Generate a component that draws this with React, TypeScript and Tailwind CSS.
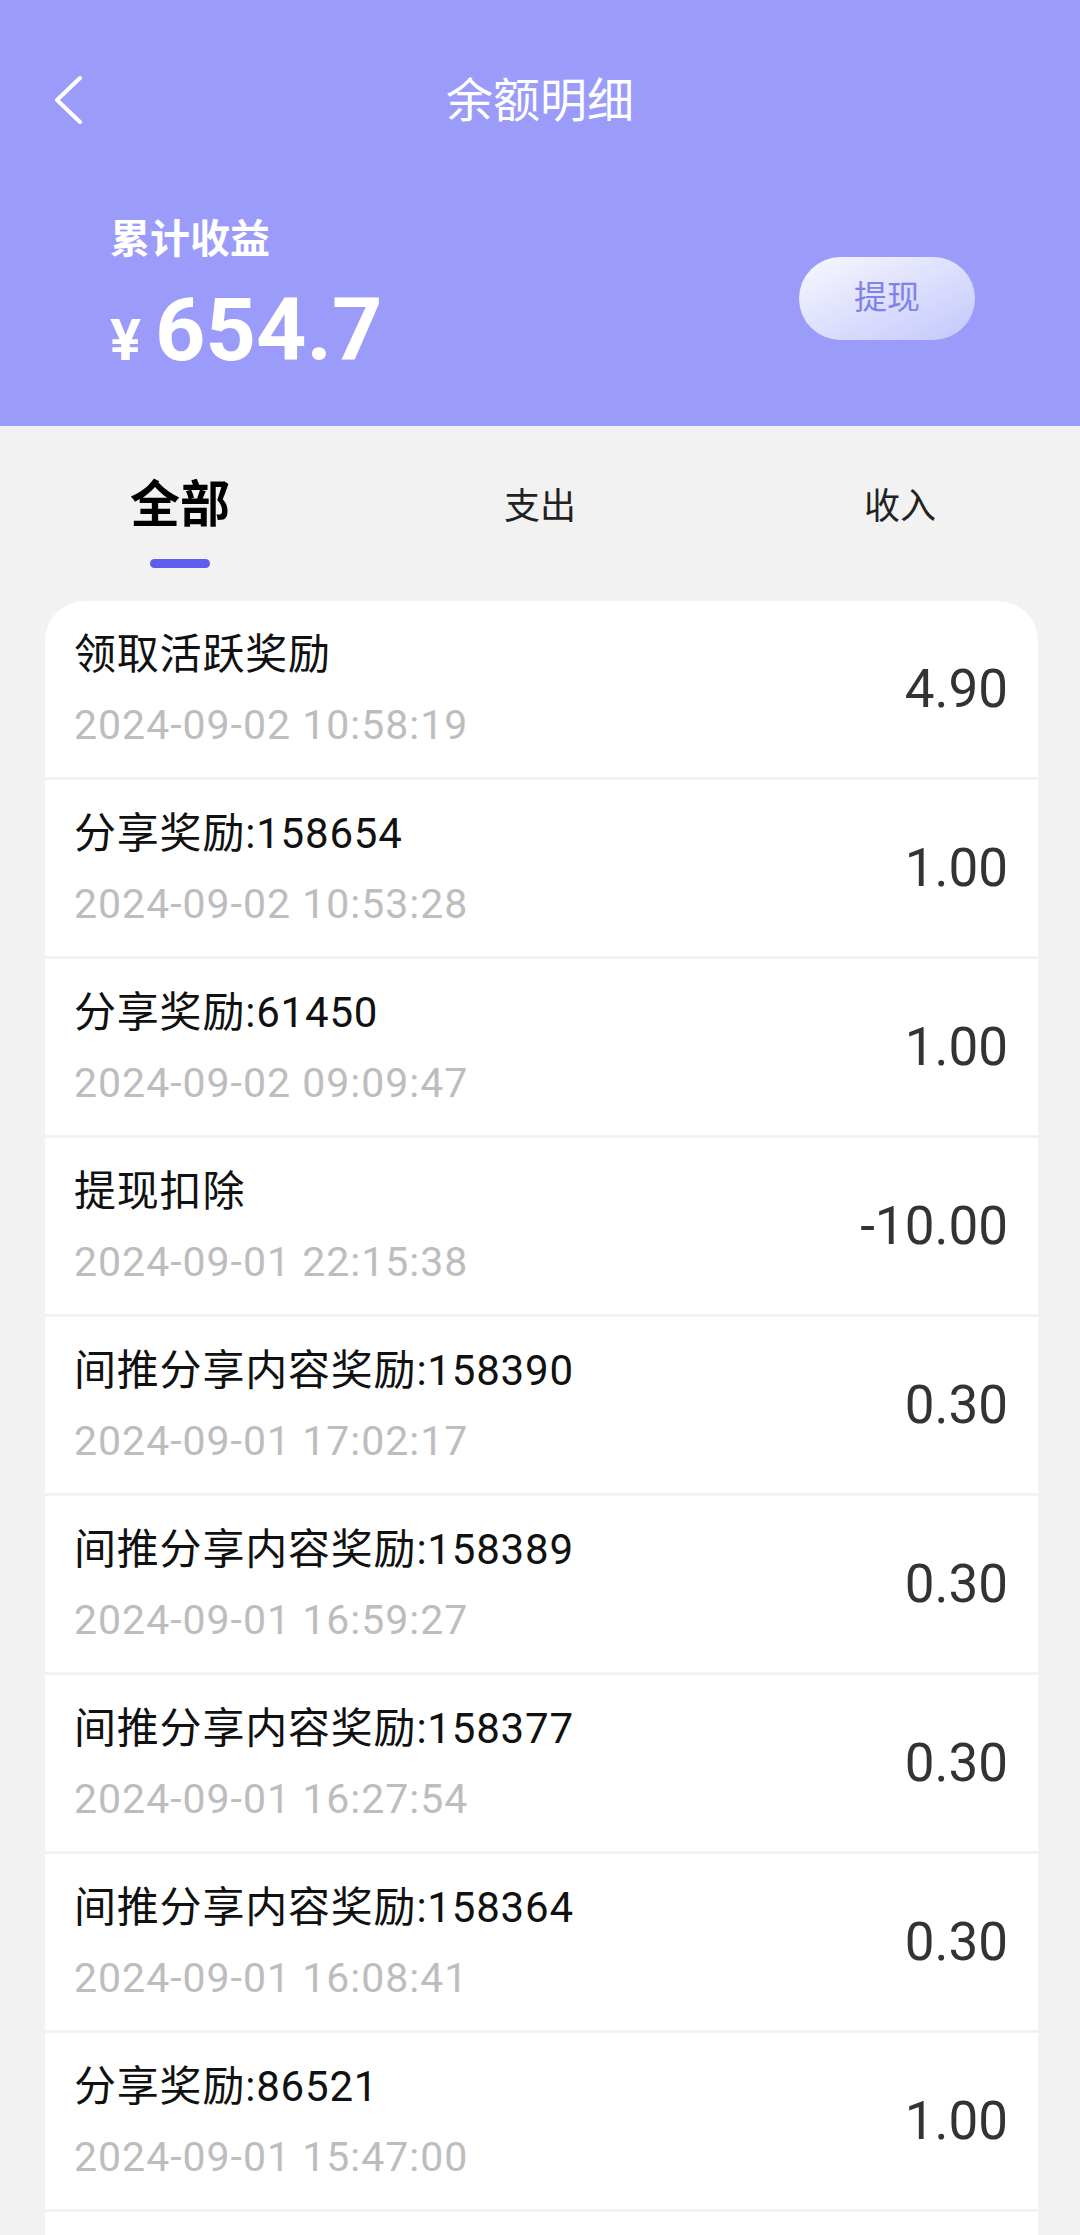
const records = [
  { title: "领取活跃奖励", time: "2024-09-02 10:58:19", amount: "4.90" },
  { title: "分享奖励:158654", time: "2024-09-02 10:53:28", amount: "1.00" },
  { title: "分享奖励:61450", time: "2024-09-02 09:09:47", amount: "1.00" },
  { title: "提现扣除", time: "2024-09-01 22:15:38", amount: "-10.00" },
  { title: "间推分享内容奖励:158390", time: "2024-09-01 17:02:17", amount: "0.30" },
  { title: "间推分享内容奖励:158389", time: "2024-09-01 16:59:27", amount: "0.30" },
  { title: "间推分享内容奖励:158377", time: "2024-09-01 16:27:54", amount: "0.30" },
  { title: "间推分享内容奖励:158364", time: "2024-09-01 16:08:41", amount: "0.30" },
  { title: "分享奖励:86521", time: "2024-09-01 15:47:00", amount: "1.00" },
  { title: "分享奖励:86498", time: "2024-09-01 15:30:12", amount: "1.00" },
];

const tabs = ["全部", "支出", "收入"];

function BackIcon() {
  return (
    <svg width="30" height="50" viewBox="0 0 30 50" fill="none">
      <path
        d="M25 3 L2 25 L25 47"
        stroke="white"
        strokeWidth="4"
        strokeLinecap="round"
        strokeLinejoin="round"
      />
    </svg>
  );
}

export default function App() {
  const active = 0;

  return (
    <div className="min-h-[2235px] bg-[#f2f2f2] font-['Roboto','Noto_Sans_CJK_SC',sans-serif]">
      <div className="h-[426px] bg-[#9b9cf9] flex flex-col">
        <div className="mt-[40px] h-[120px] grid grid-cols-[1fr_auto_1fr] items-center">
          <div className="pl-[55px] flex items-center">
            <BackIcon />
          </div>
          <div className="text-white text-[47px] leading-none">余额明细</div>
          <div />
        </div>

        <div className="flex items-center justify-between pl-[110px] pr-[105px] mt-[60px]">
          <div className="flex flex-col">
            <div className="text-white text-[40px] leading-[40px] font-bold">累计收益</div>
            <div className="mt-[26px] flex items-baseline text-white font-bold">
              <span className="text-[58px] leading-none mr-[14px]">¥</span>
              <span className="text-[88px] leading-none">654.7</span>
            </div>
          </div>
          <button className="w-[176px] h-[83px] rounded-full bg-linear-to-br from-[#f8f8ff] to-[#c4c7fa] text-[#8082ea] text-[33px] mt-[2px]">
            提现
          </button>
        </div>
      </div>

      <div className="grid grid-cols-3 pt-[54px]">
        {tabs.map((tab, i) => (
          <div key={tab} className="flex flex-col items-center">
            <div
              className={
                i === active
                  ? "text-[50px] leading-[50px] font-bold text-black"
                  : "text-[36px] leading-[50px] mt-[2px] -mb-[2px] text-[#222]"
              }
            >
              {tab}
            </div>
            <div
              className={
                i === active
                  ? "mt-[29px] w-[60px] h-[9px] rounded-full bg-[#5d5ef0]"
                  : "mt-[29px] w-[60px] h-[9px]"
              }
            />
          </div>
        ))}
      </div>

      <div className="mt-[33px] ml-[45px] mr-[42px] rounded-t-[40px] overflow-hidden flex flex-col gap-[3px]">
        {records.map((r) => (
          <div
            key={r.time}
            className="bg-white h-[176px] pl-[29px] pr-[30px] flex items-center justify-between"
          >
            <div className="flex flex-col pt-[2px]">
              <div className="text-[42px] leading-[50px] tracking-[0.8px] text-[#111]">{r.title}</div>
              <div className="mt-[20px] text-[41px] leading-[50px] tracking-[1px] text-[#bdbdbd]">
                {r.time}
              </div>
            </div>
            <div className="text-[53px] leading-none text-[#333]">{r.amount}</div>
          </div>
        ))}
      </div>
    </div>
  );
}
